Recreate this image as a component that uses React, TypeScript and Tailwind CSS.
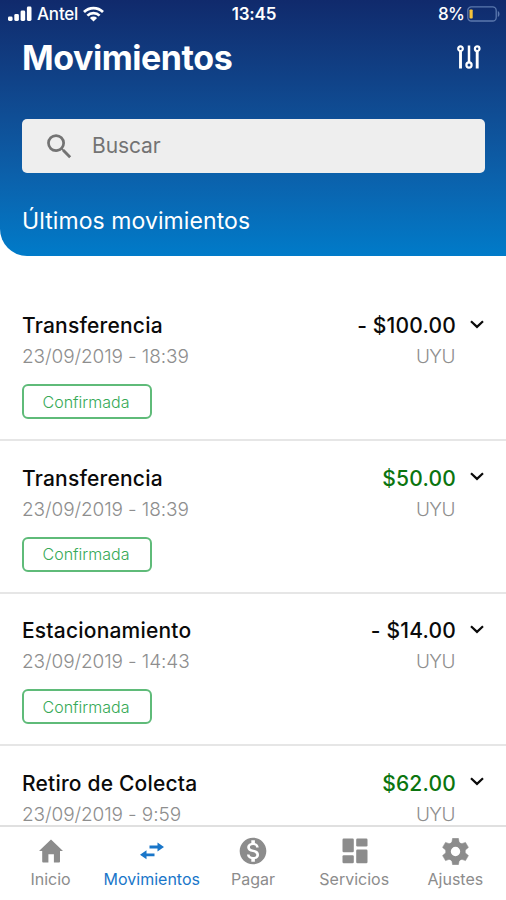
import React from 'react'
import { clsx } from 'clsx'
import { MdMonetizationOn, MdSearch } from 'react-icons/md'

interface Movement {
  title: string
  date: string
  amount: string
  currency: string
  income?: boolean
  status?: string
}

const MOVEMENTS: Movement[] = [
  { title: 'Transferencia', date: '23/09/2019 - 18:39', amount: '- $100.00', currency: 'UYU', status: 'Confirmada' },
  { title: 'Transferencia', date: '23/09/2019 - 18:39', amount: '$50.00', currency: 'UYU', income: true, status: 'Confirmada' },
  { title: 'Estacionamiento', date: '23/09/2019 - 14:43', amount: '- $14.00', currency: 'UYU', status: 'Confirmada' },
  { title: 'Retiro de Colecta', date: '23/09/2019 - 9:59', amount: '$62.00', currency: 'UYU', income: true }
]

function SignalIcon() {
  return (
    <svg width="24" height="16" viewBox="0 0 24 16" fill="currentColor">
      <rect x="0" y="10.5" width="4.6" height="4.5" rx="1.4" />
      <rect x="6.3" y="8" width="4.6" height="7" rx="1.4" />
      <rect x="12.6" y="4.5" width="4.6" height="10.5" rx="1.4" />
      <rect x="18.9" y="0.5" width="4.6" height="14.5" rx="1.4" />
    </svg>
  )
}

function WifiIcon() {
  return (
    <svg width="21" height="16" viewBox="0 0 21 16" fill="none" stroke="currentColor" strokeWidth="2.7">
      <path d="M1 6a13.4 13.4 0 0 1 19 0" />
      <path d="M4.4 9.6a8.6 8.6 0 0 1 12.2 0" />
      <path d="M10.5 15.6 6.9 12a5.1 5.1 0 0 1 7.2 0z" fill="currentColor" stroke="none" />
    </svg>
  )
}

function BatteryIcon() {
  return (
    <svg width="33" height="16" viewBox="0 0 33 16" fill="none">
      <rect x="0.8" y="0.8" width="28.4" height="14.2" rx="3.6" stroke="#5b78ae" strokeWidth="1.3" />
      <path d="M30.8 5v6c1-.4 1.7-1.5 1.7-3s-.7-2.6-1.7-3z" fill="#5b78ae" />
      <rect x="2.5" y="3.5" width="3.2" height="9" rx="0.8" fill="#f5c33b" />
    </svg>
  )
}

function FilterIcon() {
  return (
    <svg width="24" height="24" viewBox="0 0 24 24" fill="none" stroke="currentColor" strokeWidth="2.2">
      <circle cx="3.5" cy="3.7" r="2.3" />
      <path d="M3.5 6v17.5" strokeWidth="2.9" />
      <circle cx="12" cy="20" r="2.6" />
      <path d="M12 0.5v17" strokeWidth="2.5" />
      <circle cx="20.2" cy="3.7" r="2.3" />
      <path d="M20.2 6v17.5" strokeWidth="2.9" />
    </svg>
  )
}

function ChevronIcon() {
  return (
    <svg width="14" height="9" viewBox="0 0 14 9" fill="none" stroke="currentColor" strokeWidth="2.2">
      <path d="M1 1.2 7 6.9l6-5.7" />
    </svg>
  )
}

function HomeIcon() {
  return (
    <svg width="24" height="24" viewBox="0 0 24 24" fill="currentColor">
      <path d="M12 .5 24 12H21v10.6q0 .9-.9.9h-5.200v-8.300H9.400v8.300H4.100q-.9 0-.9-.9V12H0z" />
    </svg>
  )
}

function TransferIcon() {
  return (
    <svg width="24" height="18" viewBox="0 0 24 18" fill="currentColor">
      <path d="M9.500 3.600h8V.5L24 5l-6.500 4.500V6.400h-8z" />
      <path d="M14.500 11.500h-8V8.300L0 12.800l6.500 4.500v-3.100h8z" />
    </svg>
  )
}

function DashboardIcon() {
  return (
    <svg width="26" height="26" viewBox="0 0 26 26" fill="currentColor">
      <rect x="0.5" y="0.5" width="11.3" height="13.8" rx="1.2" />
      <rect x="14.2" y="0.5" width="11.3" height="8" rx="1.2" />
      <rect x="0.5" y="17.3" width="11.3" height="8" rx="1.2" />
      <rect x="14.2" y="11.5" width="11.3" height="13.8" rx="1.2" />
    </svg>
  )
}

const TEETH = [0, 60, 120, 180, 240, 300]

function GearIcon() {
  return (
    <svg width="27" height="27" viewBox="0 0 27 27">
      <circle cx="13.5" cy="13.5" r="7.4" fill="none" stroke="currentColor" strokeWidth="5.4" />
      {TEETH.map(angle => (
        <path
          key={angle}
          d="M10.6.3h5.8l.9 4.700H9.700z"
          fill="currentColor"
          stroke="currentColor"
          strokeWidth="0.5"
          strokeLinejoin="round"
          transform={`rotate(${angle} 13.5 13.5)`}
        />
      ))}
    </svg>
  )
}

const TABS = [
  { label: 'Inicio', icon: <HomeIcon /> },
  { label: 'Movimientos', icon: <TransferIcon />, active: true },
  { label: 'Pagar', icon: <MdMonetizationOn size={32} /> },
  { label: 'Servicios', icon: <DashboardIcon /> },
  { label: 'Ajustes', icon: <GearIcon /> }
]

function StatusBar() {
  return (
    <div className="grid h-7 grid-cols-3 items-center pr-1.5 pl-2 text-[17px] font-medium">
      <div className="flex items-center gap-[5px]">
        <SignalIcon />
        <span className="pt-px tracking-[-0.2px]">Antel</span>
        <WifiIcon />
      </div>
      <span className="pt-px text-center font-semibold tracking-[-0.2px]">13:45</span>
      <div className="flex items-center justify-end gap-[3px]">
        <span className="pt-px tracking-[-0.8px]">8%</span>
        <BatteryIcon />
      </div>
    </div>
  )
}

function MovementRow({ movement }: { movement: Movement }) {
  return (
    <li className="h-[152.5px] shrink-0 border-b-2 border-[#e6e6e6] px-[22px] pt-[23.5px]">
      <div className="flex items-center text-[21px] leading-[28px] font-medium tracking-[0.2px] text-[#0a0a0a]">
        <span className="flex-1">{movement.title}</span>
        <span className={clsx(movement.income && 'text-[#0b750f]')}>{movement.amount}</span>
        <span className="mb-1 ml-3.5"><ChevronIcon /></span>
      </div>
      <div className="mt-0.5 flex justify-between pr-[29px] text-[19px] leading-[30px] font-light tracking-[-0.1px] text-[#8e8e8e]">
        <span>{movement.date}</span>
        <span className="tracking-[-0.5px]">{movement.currency}</span>
      </div>
      {movement.status && (
        <div className="mt-3 flex h-[35px] w-[130px] items-center justify-center rounded-md border-2 border-[#5fbb79] pr-[2px] text-[16px] font-light text-[#35a955]">
          {movement.status}
        </div>
      )}
    </li>
  )
}

export default function App() {
  return (
    <div className="flex h-[900px] w-[506px] flex-col overflow-hidden bg-white font-['Inter','Liberation_Sans',sans-serif]">
      <header className="h-[256px] shrink-0 rounded-bl-[27px] bg-linear-to-b from-[#102a6c] to-[#007bc9] text-white">
        <StatusBar />
        <div className="flex h-[58px] items-center justify-between pr-[25px] pl-[22px]">
          <h1 className="text-[34px] font-bold tracking-[-0.45px]">Movimientos</h1>
          <FilterIcon />
        </div>
        <div className="mt-[33px] mr-[21px] ml-[22px] flex h-[54px] items-center gap-4 rounded-[5px] bg-[#eee] pl-[21px] text-[#737373]">
          <MdSearch size={33} />
          <span className="text-[21px] tracking-[-0.1px]">Buscar</span>
        </div>
        <h2 className="mt-[31px] pl-[22px] text-[23px] leading-[34px] tracking-[0.08px]">Últimos movimientos</h2>
      </header>

      <ul className="flex min-h-0 flex-1 flex-col overflow-hidden pt-[32.5px]">
        {MOVEMENTS.map((movement, i) => (
          <MovementRow key={i} movement={movement} />
        ))}
      </ul>

      <nav className="grid h-[75px] shrink-0 grid-cols-5 border-t-2 border-[#e0e0e0] bg-white">
        {TABS.map(tab => (
          <div
            key={tab.label}
            className={clsx('flex flex-col items-center', tab.active ? 'text-[#1976c9]' : 'text-[#8c8c8c]')}
          >
            <div className="mt-2 mb-px flex h-8 items-center pl-px">{tab.icon}</div>
            <span className="text-[16px] leading-[22px]">{tab.label}</span>
          </div>
        ))}
      </nav>
    </div>
  )
}
